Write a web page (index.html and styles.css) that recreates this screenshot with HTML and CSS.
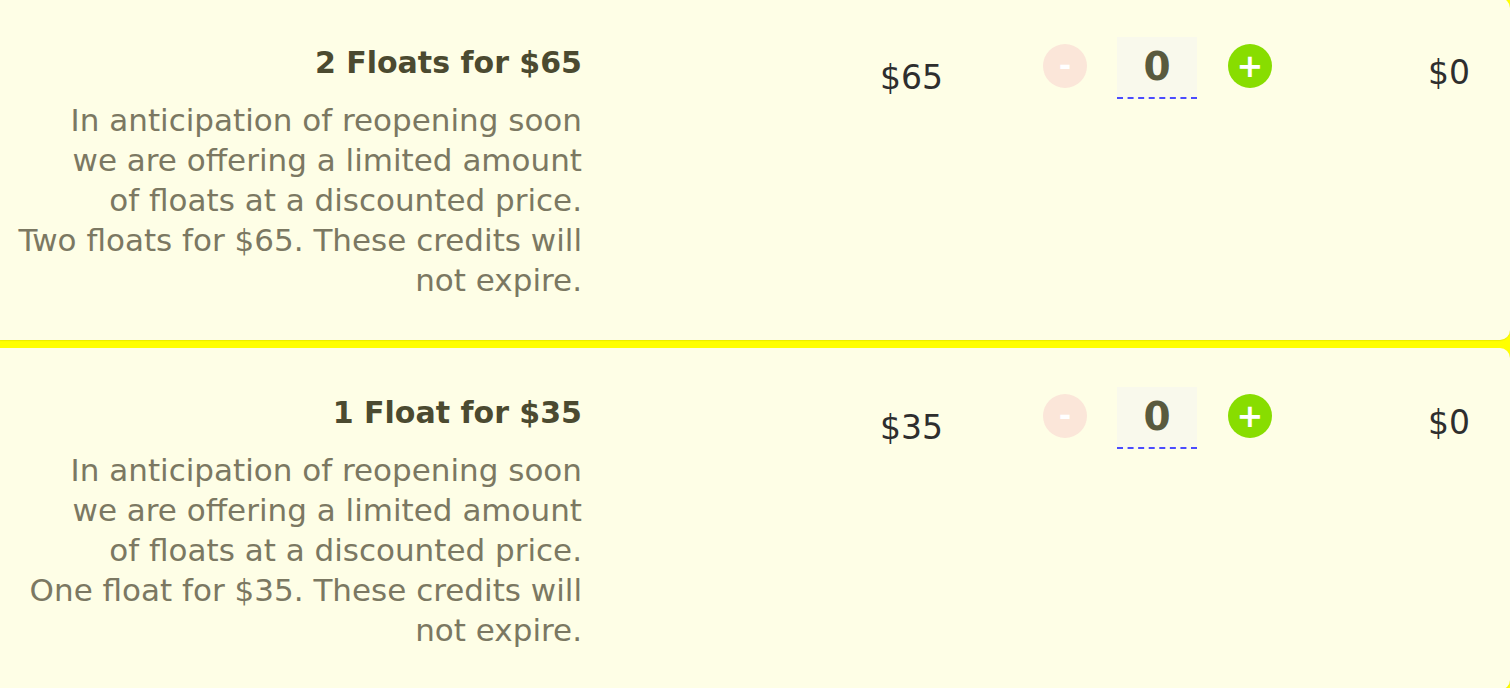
FILE: index.html
```html
<!DOCTYPE html>
<html>
<head>
<meta charset="utf-8">
<title>Floats</title>
<link rel="stylesheet" href="styles.css">
</head>
<body>
<div class="list">
  <div class="item">
    <div class="info">
      <h2 class="title">2 Floats for $65</h2>
      <p class="desc">In anticipation of reopening soon<br>we are offering a limited amount<br>of floats at a discounted price.<br>Two floats for $65. These credits will<br>not expire.</p>
    </div>
    <div class="price">$65</div>
    <div class="qty">
      <button class="btn minus">-</button>
      <div class="count">0</div>
      <button class="btn plus">+</button>
    </div>
    <div class="total">$0</div>
  </div>
  <div class="item">
    <div class="info">
      <h2 class="title">1 Float for $35</h2>
      <p class="desc">In anticipation of reopening soon<br>we are offering a limited amount<br>of floats at a discounted price.<br>One float for $35. These credits will<br>not expire.</p>
    </div>
    <div class="price">$35</div>
    <div class="qty">
      <button class="btn minus">-</button>
      <div class="count">0</div>
      <button class="btn plus">+</button>
    </div>
    <div class="total">$0</div>
  </div>
</div>
</body>
</html>
```
FILE: styles.css
```css
html, body {
  margin: 0;
  padding: 0;
  background: #ffff00;
  overflow: hidden;
}
body {
  font-family: "DejaVu Sans", "Liberation Sans", sans-serif;
}
.list {
  display: flex;
  flex-direction: column;
  gap: 8px;
  margin-top: -2px;
}
.item {
  background: #fefee6;
  border-radius: 0 10px 10px 0;
  height: 342px;
  box-sizing: border-box;
  display: flex;
  align-items: flex-start;
  padding-top: 42px;
  box-shadow: 0 1px 1px rgba(120, 120, 0, 0.15);
}
.info {
  width: 580px;
  margin-left: 2px;
  text-align: right;
}
.title {
  margin: 0;
  font-size: 30px;
  line-height: 46px;
  font-weight: 700;
  color: #4b4a30;
}
.desc {
  margin: 0;
  margin-top: 14px;
  font-size: 31px;
  line-height: 40px;
  color: #7b7862;
}
.price {
  width: 163px;
  margin-left: 298px;
  font-size: 33px;
  line-height: 44px;
  margin-top: 16px;
  color: #2e2e2e;
}
.qty {
  display: flex;
  align-items: flex-start;
  gap: 30px;
  margin-top: -3px;
}
.btn {
  width: 44px;
  height: 44px;
  border-radius: 50%;
  border: none;
  padding: 0;
  margin-top: 7px;
  color: #fff;
  font-family: "DejaVu Sans", "Liberation Sans", sans-serif;
  font-weight: 700;
  font-size: 30px;
  line-height: 44px;
  text-align: center;
}
.minus {
  background: #fbe6d9;
}
.plus {
  background: #88dd00;
  margin-left: 1px;
  font-size: 32px;
}
.count {
  width: 80px;
  height: 62px;
  box-sizing: border-box;
  background: #f9f9ec;
  border-bottom: 2px dashed #4b4bff;
  text-align: center;
  font-size: 39px;
  font-weight: 700;
  line-height: 60px;
  color: #595a3e;
}
.total {
  margin-left: auto;
  padding-right: 40px;
  font-size: 33px;
  line-height: 44px;
  margin-top: 11px;
  color: #2e2e2e;
}
```
